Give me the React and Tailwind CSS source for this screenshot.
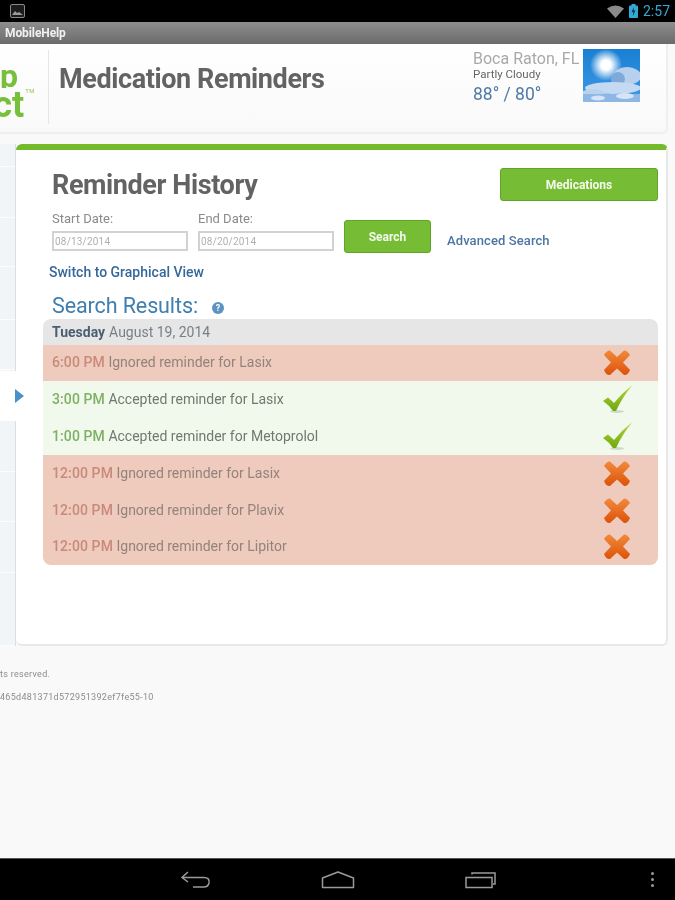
const font = { fontFamily: "Roboto, 'Liberation Sans', sans-serif" };

function XMark() {
  return (
    <svg width="28" height="28" viewBox="0 0 28 28" className="shrink-0">
      <defs>
        <linearGradient id="xg" x1="0" y1="0" x2="0" y2="1">
          <stop offset="0" stopColor="#f28a3c" />
          <stop offset="1" stopColor="#dc5208" />
        </linearGradient>
      </defs>
      <path d="M7 1.500 L14 8 L21 1.500 Q24 1 27 6 L20 13.500 L27 21 Q25 26.500 21 26 L14 19.500 L7 26 Q3 26.500 1 21 L8 13.500 L1 6 Q4 1 7 1.500Z" fill="url(#xg)" />
    </svg>
  );
}

function Check() {
  return (
    <svg width="32" height="30" viewBox="0 0 32 30" className="mb-[2px] ml-px shrink-0">
      <defs>
        <linearGradient id="cg" x1="0" y1="0" x2="0" y2="1">
          <stop offset="0" stopColor="#b5d63a" />
          <stop offset="1" stopColor="#6fa80f" />
        </linearGradient>
      </defs>
      <ellipse cx="15" cy="27.500" rx="7" ry="1.500" fill="#cfd8c8" />
      <path d="M1 17 L6 13.500 L12 19 Q20 9 30.500 1 Q21 12 14 27 L11 27 Q7 21 1 17Z" fill="url(#cg)" />
    </svg>
  );
}

function Row({ time, text, ok, h }) {
  return (
    <div className={`flex items-center justify-between pl-[9px] pr-[25px] text-[14px] ${h} ${ok ? "text-[#6e7a70]" : "text-[#93837b]"}`}>
      <div className="pb-px">
        <span className={`font-medium tracking-[0.1px] ${ok ? "text-[#7fb065]" : "text-[#c98a7a]"}`}>{time}</span> {text}
      </div>
      <div className="flex w-[32px] justify-center">{ok ? <Check /> : <XMark />}</div>
    </div>
  );
}

function Sidebar() {
  const rows = ["h-[23px]", "h-[51px]", "h-[49px]", "h-[53px]", "h-[50px]", "h-[51px]", "h-[51px]", "h-[50px]", "h-[51px]", "h-[73px]"];
  return (
    <div className="flex w-[16px] shrink-0 flex-col border-r border-[#dcdfe1]">
      {rows.map((r, i) => (
        <div key={i} className={`${r} border-b border-[#fbfcfd] bg-[#f2f5f7]`} />
      ))}
    </div>
  );
}

export default function App() {
  return (
    <div style={font} className="relative flex h-[900px] w-[675px] flex-col overflow-hidden bg-[#f9f9f9] blur-[0.4px]">
      {/* status bar */}
      <div className="flex h-[22px] shrink-0 items-center justify-between bg-black pl-[10px] pr-[5px]">
        <svg width="16" height="14" viewBox="0 0 16 14">
          <rect x="0.500" y="0.500" width="14" height="13" rx="1.500" fill="#1c1c1c" stroke="#8a8a8a" />
          <path d="M2 11 L5 7 L7 9 L9 8 L13 11Z" fill="#9a9a9a" />
        </svg>
        <div className="flex items-center gap-[5px]">
          <svg width="17" height="13" viewBox="0 0 17 13">
            <path d="M0 3.500 Q8.500 -2.500 17 3.500 L8.500 13Z" fill="#8a8a8a" />
          </svg>
          <svg width="9" height="14" viewBox="0 0 9 14">
            <rect x="2.500" y="0" width="4" height="2" fill="#33a9d6" />
            <rect x="0" y="1.500" width="9" height="12.500" rx="1" fill="#33a9d6" />
            <path d="M5 3 L2.500 8 L4.300 8 L3.800 12 L6.500 6.500 L4.700 6.500Z" fill="#0b3a4c" />
          </svg>
          <span className="text-[14px] leading-none text-[#33a9d6]">2:57</span>
        </div>
      </div>

      {/* title bar */}
      <div className="flex h-[22px] shrink-0 items-center bg-gradient-to-b from-[#8e8e8e] to-[#6b6b6b] pl-[5px] text-[12px] font-bold tracking-[-0.1px] text-[#f1f1f1]">
        MobileHelp
      </div>

      {/* header */}
      <div className="flex h-[90px] w-[668px] shrink-0 rounded-br-[6px] border-b-2 border-r-2 border-[#efefef] bg-gradient-to-b from-white to-[#f9f9f9]">
        <div className="mb-[8px] mt-[6px] flex w-[49px] shrink-0 flex-col items-end overflow-hidden border-r border-[#e6e6e6] pr-[13px] pt-[11px] text-[32px] font-bold leading-[30px] text-[#78bf3c]">
          <div className="h-[27px] overflow-hidden pr-[17px]">p</div>
          <div className="flex items-start whitespace-nowrap text-[36px] leading-[34px]">
            ct<span className="ml-px mt-0 text-[6px] font-normal leading-[6px] tracking-[0.5px] text-[#8fc860]">TM</span>
          </div>
        </div>
        <div className="ml-[10px] flex-1 pt-[18px] text-[27px] font-bold leading-[34px] tracking-[-0.4px] text-[#636363]">
          Medication Reminders
        </div>
        <div className="flex shrink-0 pr-[26px] pt-[5px]">
          <div className="w-[110px]">
            <div className="text-[16px] leading-[19px] text-[#a9a9a9]">Boca Raton, FL</div>
            <div className="text-[11.5px] leading-[13px] text-[#666666]">Partly Cloudy</div>
            <div className="mt-px text-[17.500px] leading-[24px] text-[#4f7ba6]">88° / 80°</div>
          </div>
          <svg width="57" height="53" viewBox="0 0 57 53" className="shrink-0">
            <defs>
              <linearGradient id="sky" x1="0" y1="0" x2="0" y2="1">
                <stop offset="0" stopColor="#1a7fd2" />
                <stop offset="1" stopColor="#3f9ae6" />
              </linearGradient>
              <radialGradient id="sun">
                <stop offset="0.300" stopColor="#ffffff" />
                <stop offset="1" stopColor="#ffffff" stopOpacity="0" />
              </radialGradient>
            </defs>
            <rect width="57" height="53" fill="url(#sky)" />
            <circle cx="23" cy="16" r="16" fill="url(#sun)" />
            <ellipse cx="44" cy="27" rx="14" ry="9" fill="#b6d0ee" />
            <ellipse cx="35" cy="30" rx="7" ry="7" fill="#7fa9d8" />
            <ellipse cx="30" cy="39" rx="28" ry="6" fill="#c5daf2" />
            <ellipse cx="10" cy="45" rx="12" ry="5" fill="#b9d2ee" />
            <rect y="45" width="57" height="8" fill="#8fb7e6" />
            <ellipse cx="42" cy="47" rx="9" ry="3" fill="#d5e4f6" />
            <ellipse cx="15" cy="49" rx="7" ry="2.500" fill="#d5e4f6" />
          </svg>
        </div>
      </div>

      {/* body */}
      <div className="mt-[10px] flex h-[502px] w-[668px] shrink-0">
        <Sidebar />
        <div className="min-w-0 flex-1 rounded-[6px] border-b-2 border-r-2 border-[#e8e8e8] border-t-[6px] border-t-[#74bb2c] bg-white pl-[27px] pr-[8px]">
          <div className="flex justify-between pl-[9px] pt-[18px]">
            <div className="text-[27px] font-bold leading-[34px] tracking-[-0.4px] text-[#636363]">Reminder History</div>
            <button className="h-[33px] w-[158px] rounded-[3px] border border-[#5fa52a] bg-[#76bd35] text-[12px] font-bold text-[#f4f9ee]">
              Medications
            </button>
          </div>
          <div className="mt-[9px] flex items-start pl-[9px]">
            <div>
              <div className="text-[13px] leading-[16px] text-[#8a8a8a]">Start Date:</div>
              <div className="mt-[4px] flex h-[20px] w-[136px] items-center border-2 border-[#d2d2d2] pl-[1px] text-[10px] tracking-[0.2px] text-[#b0b0b0]">08/13/2014</div>
            </div>
            <div className="ml-[10px]">
              <div className="text-[13px] leading-[16px] text-[#8a8a8a]">End Date:</div>
              <div className="mt-[4px] flex h-[20px] w-[136px] items-center border-2 border-[#d2d2d2] pl-[1px] text-[10px] tracking-[0.2px] text-[#b0b0b0]">08/20/2014</div>
            </div>
            <button className="ml-[10px] mt-[9px] h-[33px] w-[87px] rounded-[3px] border border-[#5fa52a] bg-[#76bd35] text-[12px] font-bold text-[#f4f9ee]">
              Search
            </button>
            <div className="ml-[16px] mt-[22px] text-[13px] font-medium leading-[16px] tracking-[0.1px] text-[#4c74a4]">Advanced Search</div>
          </div>
          <div className="ml-[6px] mt-[10px] text-[14px] font-medium leading-[18px] text-[#35689a]">Switch to Graphical View</div>
          <div className="ml-[9px] mt-[12px] flex items-center text-[21.500px] leading-[26px] tracking-[-0.1px] text-[#3f7eae]">
            Search Results:
            <span className="ml-[14px] mt-[4px] flex h-[12px] w-[12px] items-center justify-center rounded-full bg-[#5b93c4] text-[9px] font-bold leading-none text-white">?</span>
          </div>
          <div className="overflow-hidden rounded-[8px]">
            <div className="flex h-[26px] items-center bg-[#e6e6e6] pl-[9px] text-[14px] text-[#77808a]">
              <span className="mr-[4px] font-bold text-[#4c5f72]">Tuesday</span> August 19, 2014
            </div>
            <div className="bg-[#eecbbd]">
              <Row time="6:00 PM" text="Ignored reminder for Lasix" h="h-[36px]" />
            </div>
            <div className="bg-[#f0f9ec]">
              <Row ok time="3:00 PM" text="Accepted reminder for Lasix" h="h-[37px]" />
              <Row ok time="1:00 PM" text="Accepted reminder for Metoprolol" h="h-[37px]" />
            </div>
            <div className="bg-[#eecbbd]">
              <Row time="12:00 PM" text="Ignored reminder for Lasix" h="h-[37px]" />
              <Row time="12:00 PM" text="Ignored reminder for Plavix" h="h-[37px]" />
              <Row time="12:00 PM" text="Ignored reminder for Lipitor" h="h-[36px]" />
            </div>
          </div>
        </div>
      </div>

      {/* footer */}
      <div className="mt-[22px] flex-1 text-[9px] leading-[12px] tracking-[0.3px] text-[#8c8c8c]">
        <div>ts reserved.</div>
        <div className="mt-[11px]">465d481371d572951392ef7fe55-10</div>
      </div>

      {/* nav bar */}
      <div className="relative flex h-[42px] shrink-0 items-center border-t border-[#555555] bg-black">
        <svg width="32" height="20" viewBox="0 0 32 20" className="ml-[180px]" fill="none" stroke="#9a9a9a" strokeWidth="1.500">
          <path d="M8 2 L2 7.500 L8 12" />
          <path d="M2 7.500 H24 Q30 7.500 29 13 Q28 17 24 17 H13" />
        </svg>
        <svg width="34" height="18" viewBox="0 0 34 18" className="ml-[109px]" fill="none" stroke="#9a9a9a" strokeWidth="1.500">
          <path d="M1.500 7 L17 1 L32.500 7 V16.500 H1.500Z" strokeLinejoin="round" />
        </svg>
        <svg width="32" height="18" viewBox="0 0 32 18" className="ml-[110px]" fill="none" stroke="#9a9a9a" strokeWidth="1.500">
          <rect x="1" y="6.500" width="26" height="10" />
          <path d="M7 3.500 V2 H30 V13 H28" />
        </svg>
        <div className="ml-[154px] flex flex-col gap-[3px]">
          <div className="h-[3px] w-[3px] rounded-full bg-[#9a9a9a]" />
          <div className="h-[3px] w-[3px] rounded-full bg-[#9a9a9a]" />
          <div className="h-[3px] w-[3px] rounded-full bg-[#9a9a9a]" />
        </div>
      </div>

      {/* side tab */}
      <div className="absolute left-0 top-[371px] flex h-[50px] w-[30px] items-center bg-white [clip-path:polygon(0_0,70%_0,100%_50%,70%_100%,0_100%)]">
        <div className="ml-[15px] h-0 w-0 border-y-[7px] border-l-[9px] border-y-transparent border-l-[#4a90c8]" />
      </div>
    </div>
  );
}
